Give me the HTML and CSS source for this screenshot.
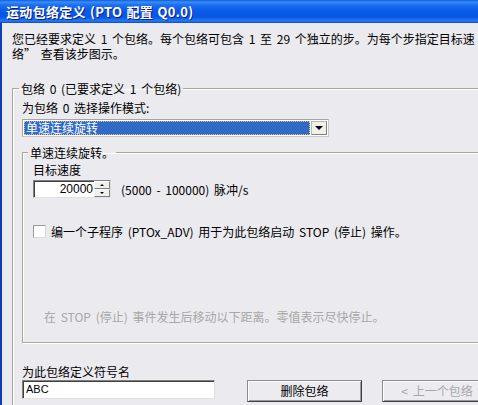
FILE: index.html
```html
<!DOCTYPE html>
<html lang="zh-CN">
<head>
    <meta charset="UTF-8">
    <title>运动包络定义</title>
    <link rel="stylesheet" href="styles.css">
</head>
<body>
    <div class="window">
        <div class="titlebar">运动包络定义 (PTO 配置 Q0.0)</div>
        <div class="content">
            <p class="intro">您已经要求定义 1 个包络。每个包络可包含 1 至 29 个独立的步。为每个步指定目标速<br>络” 查看该步图示。</p>

            <fieldset class="group outer">
                <legend>包络 0 (已要求定义 1 个包络)</legend>
                <div class="label">为包络 0 选择操作模式:</div>
                <div class="combo">
                    <div class="combo-value"><span>单速连续旋转</span></div>
                    <div class="combo-btn"><span class="arrow-down"></span></div>
                </div>

                <fieldset class="group inner">
                    <legend>单速连续旋转。</legend>
                    <div class="label">目标速度</div>
                    <div class="speed-row">
                        <div class="spinner">
                            <div class="spin-value">20000</div>
                            <div class="spin-btns">
                                <div class="spin-btn"><span class="tri-up"></span></div>
                                <div class="spin-btn"><span class="tri-down"></span></div>
                            </div>
                        </div>
                        <span class="range">(5000 - 100000) 脉冲/s</span>
                    </div>
                    <div class="check-row">
                        <span class="checkbox"></span>
                        <span>编一个子程序 (PTOx_ADV) 用于为此包络启动 STOP (停止) 操作。</span>
                    </div>
                    <div class="disabled-text">在 STOP (停止) 事件发生后移动以下距离。零值表示尽快停止。</div>
                </fieldset>

                <div class="label symbol-label">为此包络定义符号名</div>
                <div class="bottom-row">
                    <div class="textbox">ABC</div>
                    <button class="btn delete">删除包络</button>
                    <button class="btn prev" disabled>&lt; 上一个包络</button>
                </div>
            </fieldset>
        </div>
    </div>
</body>
</html>
```

FILE: styles.css
```css
* {
    box-sizing: border-box;
}
body {
    margin: 0;
    width: 478px;
    height: 405px;
    overflow: hidden;
    background: #ebeaef;
    font-family: "Noto Sans CJK SC", "Liberation Sans", sans-serif;
    font-size: 12px;
    line-height: 15px;
    word-spacing: 2px;
    color: #000;
}
.window {
    height: 405px;
    border-left: 2px solid #0a3fb8;
}
.titlebar {
    height: 23px;
    margin-left: -2px;
    padding: 0 0 0 6px;
    line-height: 23px;
    font-size: 13px;
    font-weight: bold;
    word-spacing: 1px;
    letter-spacing: 0.3px;
    color: #fff;
    text-shadow: 1px 1px 0 #0a1e80;
    white-space: nowrap;
    background: linear-gradient(to bottom, #0a5fdf 0, #3d8cf5 2px, #1c6ff0 5px, #0a5ae6 11px, #0656e8 17px, #2a7af2 21px, #0a48c8 23px);
}
.content {
    padding: 8px 0 0 10px;
    width: 560px;
}
.intro {
    margin: 0;
    white-space: nowrap;
    width: 466px;
    overflow: hidden;
}
.group {
    margin: 0;
    border: 1px solid #aca899;
    box-shadow: inset 1px 1px 0 #fff, 1px 1px 0 #fff;
}
.group legend {
    padding: 0 2px;
    line-height: 15px;
    white-space: nowrap;
}
.outer {
    margin-top: 20px;
    padding: 4px 0 40px 9px;
    width: 540px;
}
.outer > legend {
    margin-left: -3px;
}
.label {
    white-space: nowrap;
}
.combo {
    margin-top: 4px;
    width: 307px;
    height: 18px;
    display: flex;
    align-items: stretch;
    padding: 1px;
    background: #fff;
    border: 1px solid #a5a5a5;
    border-right-color: #c9c9c9;
    border-bottom-color: #c9c9c9;
}
.combo-value {
    flex: 1;
    margin-right: 1px;
    background: #316ac5;
    border: 1px dotted #e0c080;
    color: #fff;
    line-height: 12px;
    padding-left: 1px;
}
.combo-btn {
    width: 16px;
    display: flex;
    align-items: center;
    justify-content: center;
    background: #f1f0ec;
    border: 1px solid #b8b8b8;
    border-right-color: #808080;
    border-bottom-color: #808080;
}
.arrow-down {
    width: 0;
    height: 0;
    border-left: 4px solid transparent;
    border-right: 4px solid transparent;
    border-top: 4px solid #000;
}
.inner {
    margin-top: 8px;
    padding: 2px 0 18px 10px;
    width: 520px;
}
.inner > legend {
    margin-left: -5px;
}
.speed-row {
    margin-top: 3px;
    display: flex;
    align-items: center;
    gap: 10px;
}
.spinner {
    flex: none;
    width: 78px;
    height: 18px;
    display: flex;
    background: #fff;
    border: 1px solid #808080;
    border-right-color: #e0e0e0;
    border-bottom-color: #e0e0e0;
    box-shadow: inset 1px 1px 0 #404040;
}
.spin-value {
    flex: 1;
    text-align: right;
    padding-right: 1px;
    line-height: 16px;
    font-family: "Liberation Sans", sans-serif;
    font-size: 12px;
}
.spin-btns {
    width: 16px;
    display: flex;
    flex-direction: column;
}
.spin-btn {
    flex: 1;
    display: flex;
    align-items: center;
    justify-content: center;
    background: #f1f0ec;
    border: 1px solid #fff;
    border-right-color: #808080;
    border-bottom-color: #808080;
}
.tri-up, .tri-down {
    width: 0;
    height: 0;
    border-left: 2px solid transparent;
    border-right: 2px solid transparent;
}
.tri-up {
    border-bottom: 2px solid #000;
}
.tri-down {
    border-top: 2px solid #000;
}
.range {
    white-space: nowrap;
}
.check-row {
    margin-top: 26px;
    display: flex;
    align-items: center;
    gap: 5px;
    white-space: nowrap;
}
.checkbox {
    flex: none;
    width: 13px;
    height: 13px;
    background: #fff;
    border: 1px solid #9a9a9a;
    border-right-color: #d8d8d8;
    border-bottom-color: #d8d8d8;
}
.disabled-text {
    margin-top: 70px;
    margin-left: 11px;
    color: #a7a7a7;
    white-space: nowrap;
}
.symbol-label {
    margin-top: 21px;
}
.bottom-row {
    margin-top: 1px;
    display: flex;
    align-items: flex-start;
}
.textbox {
    flex: none;
    width: 193px;
    height: 19px;
    padding-left: 3px;
    line-height: 16px;
    background: #fff;
    border: 1px solid #808080;
    border-right-color: #e0e0e0;
    border-bottom-color: #e0e0e0;
    box-shadow: inset 1px 1px 0 #404040;
    font-family: "Liberation Sans", sans-serif;
    font-size: 11px;
}
.btn {
    flex: none;
    height: 22px;
    padding: 0;
    font-family: inherit;
    font-size: 12px;
    line-height: 18px;
    word-spacing: inherit;
    background: #ecebf0;
    border: 1px solid #8c8c8c;
    border-right-color: #404040;
    border-bottom-color: #404040;
    box-shadow: inset 1px 1px 0 #fff, inset -1px -1px 0 #9a9a9a;
    color: #000;
}
.delete {
    width: 115px;
    margin-left: 32px;
}
.prev {
    width: 110px;
    margin-left: 20px;
    color: #a7a7a7;
}
```
